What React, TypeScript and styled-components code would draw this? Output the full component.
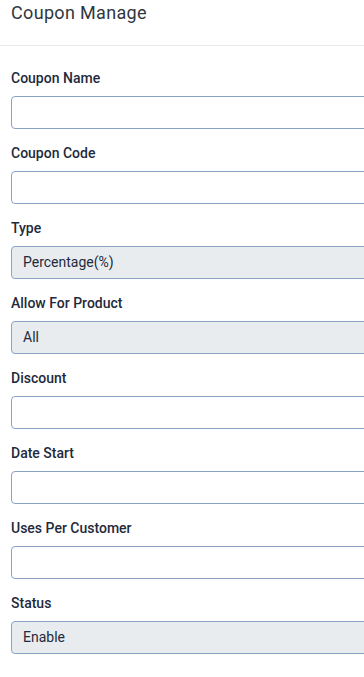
import React from 'react';
import styled, { createGlobalStyle } from 'styled-components';

const GlobalStyle = createGlobalStyle`
  body {
    margin: 0;
    background: #fff;
    font-family: Roboto, "Liberation Sans", sans-serif;
    overflow-x: hidden;
  }
`;

const Header = styled.div`
  height: 46px;
  padding: 1px 11px 0;
  box-sizing: border-box;
  border-bottom: 1px solid #e9ecef;
`;

const Title = styled.h4`
  margin: 0;
  font-size: 18px;
  line-height: 24px;
  font-weight: 400;
  letter-spacing: 0.33px;
  color: #2f3640;
`;

const Form = styled.form`
  padding: 22px 0 0 11px;
`;

const Group = styled.div`
  margin-bottom: 14px;
`;

const Label = styled.label`
  display: block;
  font-size: 14px;
  line-height: 20px;
  font-weight: 500;
  color: #1f2a3c;
  margin-bottom: 8px;
`;

const fieldBase = `
  display: block;
  width: 400px;
  height: 33px;
  box-sizing: border-box;
  border: 1px solid #8aa3c4;
  border-radius: 4px;
  padding: 0 11px;
  font-family: Roboto, "Liberation Sans", sans-serif;
  font-size: 14px;
  color: #1f2a3c;
  outline: none;
`;

const Input = styled.input`
  ${fieldBase}
  background: #fff;
`;

const Select = styled.div`
  ${fieldBase}
  background: #e9ecef;
  line-height: 31px;
`;

type Field = { label: string; value?: string; select?: boolean };

const fields: Field[] = [
  { label: 'Coupon Name' },
  { label: 'Coupon Code' },
  { label: 'Type', value: 'Percentage(%)', select: true },
  { label: 'Allow For Product', value: 'All', select: true },
  { label: 'Discount' },
  { label: 'Date Start' },
  { label: 'Uses Per Customer' },
  { label: 'Status', value: 'Enable', select: true },
];

const App: React.FC = () => {
  return (
    <>
      <GlobalStyle />
      <Header>
        <Title>Coupon Manage</Title>
      </Header>
      <Form onSubmit={(e) => e.preventDefault()}>
        {fields.map((f) => (
          <Group key={f.label}>
            <Label>{f.label}</Label>
            {f.select ? <Select>{f.value}</Select> : <Input type="text" />}
          </Group>
        ))}
      </Form>
    </>
  );
};

export default App;
